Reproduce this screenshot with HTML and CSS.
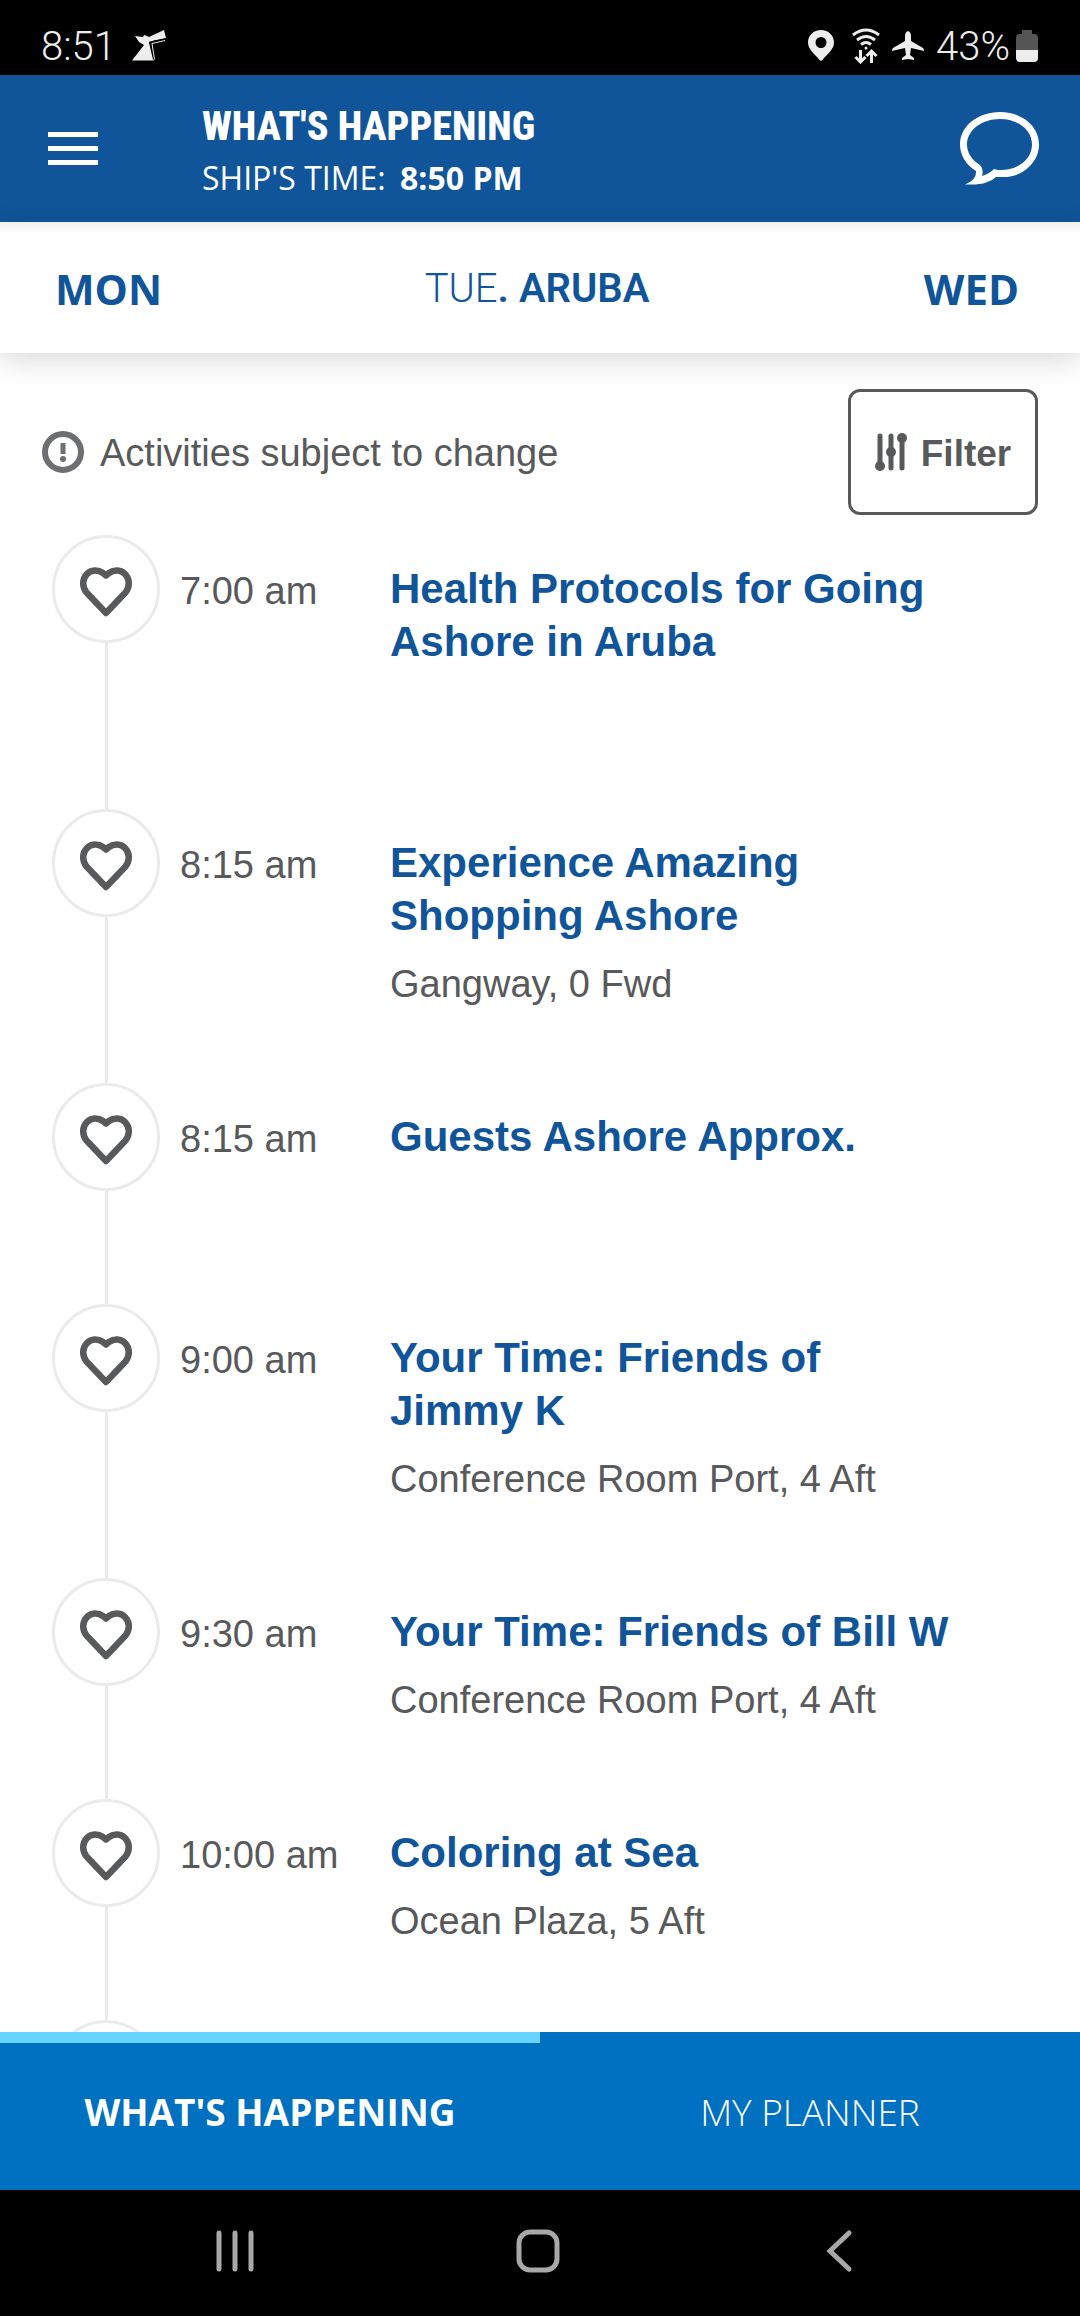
FILE: index.html
```html
<!DOCTYPE html>
<html lang="en">
<head>
    <meta charset="UTF-8">
    <meta name="viewport" content="width=device-width, initial-scale=1.0">
    <title>What's Happening</title>
    <link rel="stylesheet" href="styles.css">
</head>
<body>
    <!-- Icons used more than once -->
    <svg class="sprite" aria-hidden="true">
        <symbol id="heart" viewBox="0 0 54 50">
            <path d="M27 8.500 L24 6 C19 2.500 12 2.500 8 7 C3 12 3 20 7.500 25.500 L27 46 L46.500 25.500 C51 20 51 12 46 7 C42 2.500 35 2.500 30 6 Z" fill="none" stroke="#58595b" stroke-width="6.500" stroke-linejoin="round"/>
        </symbol>
    </svg>

    <div class="status-bar">
        <span>8:51</span>
        <svg class="status-bird" width="34" height="32" viewBox="0 0 34 32" fill="#ededed">
            <path d="M3 6l8 1 1-2 3 1 2 1L32 0l2 8-14 3-1 3 3 16.500H0L12 15l-5-3z"/>
            <path d="M33 9.500L18 12.500l4 17" fill="none" stroke="#000" stroke-width="2"/>
            <path d="M33 10.500L20 13.500l2.500 16" fill="none" stroke="#ededed"/>
        </svg>
        <div class="status-icons">
            <svg class="pin" width="26" height="32" viewBox="0 0 26 32" fill="#ededed">
                <path fill-rule="evenodd" d="M13 0C5.500 0 0 5.500 0 12.500 0 20 8 25 11.500 30q1.500 1.500 3 0C18 25 26 20 26 12.500 26 5.500 20.500 0 13 0zm0 7a5.500 5.500 0 1 1 0 11 5.500 5.500 0 0 1 0-11z"/>
            </svg>
            <svg width="28" height="36" viewBox="0 0 28 36" fill="none" stroke="#ededed" stroke-width="3">
                <path d="M1 7q13-10 26 0M5 12q9-7 18 0M9 16.500q5-4 10 0"/>
                <circle cx="14" cy="20" r="1.500" fill="#ededed" stroke="none"/>
                <path d="M8.500 22v11M3.500 29l5 5 5-5M19.500 35V24M14.500 28l5-5 5 5"/>
            </svg>
            <svg width="32" height="32" viewBox="0 0 32 32" fill="#ededed">
                <path d="M16 1q3 1 3 5v5l12 7q1 1 1 3l-13-3-1 7 4 3v2l-6-1-6 1v-2l4-3-1-7-13 3q0-2 1-3l12-7V6q0-4 3-5z"/>
            </svg>
            <span>43%</span>
            <svg class="battery" width="22" height="32" viewBox="0 0 22 32">
                <path d="M6 0h10v4h2q4 0 4 4v12H0V8q0-4 4-4h2z" fill="#555"/>
                <path d="M0 20h22v8q0 4-4 4H4q-4 0-4-4z" fill="#ededed"/>
            </svg>
        </div>
    </div>

    <header class="app-header">
        <button class="icon-btn" aria-label="Menu">
            <svg width="50" height="34" viewBox="0 0 50 34" fill="#fff">
                <path d="M0 0h50v5H0zM0 14h50v5H0zM0 28h50v5H0z"/>
            </svg>
        </button>
        <div class="header-text">
            <h1>WHAT'S HAPPENING</h1>
            <p>SHIP'S TIME: <strong>8:50 PM</strong></p>
        </div>
        <button class="icon-btn" aria-label="Chat">
            <svg width="80" height="74" viewBox="0 0 80 74" fill="#fff">
                <path fill-rule="evenodd" d="M40 0C62 0 79 14 79 32.500S62 65 44 65L36 65Q32 69 26 70.500Q20 73 5 72.500Q17 68 16 59C6 53 0 43 0 32.500C0 14 18 0 40 0zM40 7C22 7 7 18 7 32.500C7 41 12 48 20 53Q24 57 22 64Q29 62 34 57L38 58C58 59 72 47 72 32.500C72 18 58 7 40 7z"/>
            </svg>
        </button>
    </header>

    <nav class="day-nav">
        <a href="#mon">MON</a>
        <span class="current-day">TUE<strong>. ARUBA</strong></span>
        <a href="#wed">WED</a>
    </nav>

    <main class="content">
        <div class="toolbar">
            <svg width="42" height="42" viewBox="0 0 42 42">
                <circle cx="21" cy="21" r="18" fill="none" stroke="#6d6e71" stroke-width="6"/>
                <path d="M18.500 12h5v11h-5z" fill="#6d6e71"/>
                <circle cx="21" cy="28" r="3" fill="#6d6e71"/>
            </svg>
            <p>Activities subject to change</p>
            <button class="filter-btn">
                <svg width="32" height="38" viewBox="0 0 32 38" fill="#58595b" stroke="#58595b" stroke-width="5" stroke-linecap="round">
                    <path d="M5 3v32M16 3v32M27 3v32"/>
                    <g stroke="none">
                        <circle cx="5" cy="33" r="5"/>
                        <circle cx="16" cy="19" r="5"/>
                        <circle cx="27" cy="5" r="5"/>
                    </g>
                </svg>
                <span>Filter</span>
            </button>
        </div>

        <ul class="timeline">
            <li class="event">
                <button class="fav-btn" aria-label="Add to favorites"><svg><use href="#heart"/></svg></button>
                <time>7:00 am</time>
                <div class="event-info">
                    <h2>Health Protocols for Going Ashore in Aruba</h2>
                    <p></p>
                </div>
            </li>
            <li class="event">
                <button class="fav-btn" aria-label="Add to favorites"><svg><use href="#heart"/></svg></button>
                <time>8:15 am</time>
                <div class="event-info">
                    <h2>Experience Amazing Shopping Ashore</h2>
                    <p>Gangway, 0 Fwd</p>
                </div>
            </li>
            <li class="event">
                <button class="fav-btn" aria-label="Add to favorites"><svg><use href="#heart"/></svg></button>
                <time>8:15 am</time>
                <div class="event-info">
                    <h2>Guests Ashore Approx.</h2>
                    <p></p>
                </div>
            </li>
            <li class="event">
                <button class="fav-btn" aria-label="Add to favorites"><svg><use href="#heart"/></svg></button>
                <time>9:00 am</time>
                <div class="event-info">
                    <h2>Your Time: Friends of Jimmy K</h2>
                    <p>Conference Room Port, 4 Aft</p>
                </div>
            </li>
            <li class="event">
                <button class="fav-btn" aria-label="Add to favorites"><svg><use href="#heart"/></svg></button>
                <time>9:30 am</time>
                <div class="event-info">
                    <h2>Your Time: Friends of Bill W</h2>
                    <p>Conference Room Port, 4 Aft</p>
                </div>
            </li>
            <li class="event">
                <button class="fav-btn" aria-label="Add to favorites"><svg><use href="#heart"/></svg></button>
                <time>10:00 am</time>
                <div class="event-info">
                    <h2>Coloring at Sea</h2>
                    <p>Ocean Plaza, 5 Aft</p>
                </div>
            </li>
            <li class="event">
                <button class="fav-btn" aria-label="Add to favorites"><svg><use href="#heart"/></svg></button>
            </li>
        </ul>
    </main>

    <nav class="tabs">
        <a class="active" href="#happening">WHAT'S HAPPENING</a>
        <a href="#planner">MY PLANNER</a>
    </nav>

    <div class="system-nav">
        <button aria-label="Recent apps">
            <svg width="44" height="44" viewBox="0 0 44 44" stroke="#a8a8a8" stroke-width="5" stroke-linecap="round">
                <path d="M5 4v36M21 4v36M37 4v36"/>
            </svg>
        </button>
        <button aria-label="Home">
            <svg width="44" height="44" viewBox="0 0 44 44" fill="none" stroke="#a8a8a8" stroke-width="5">
                <rect x="3" y="3" width="38" height="38" rx="11"/>
            </svg>
        </button>
        <button aria-label="Back">
            <svg width="44" height="44" viewBox="0 0 44 44" fill="none" stroke="#a8a8a8" stroke-width="5" stroke-linecap="round">
                <path d="M31 4L12 22l19 18"/>
            </svg>
        </button>
    </div>
</body>
</html>
```
FILE: styles.css
```css
* {
    box-sizing: border-box;
}

body {
    font-family: "Liberation Sans", Arial, sans-serif;
    font-size: 38px;
    color: #58595b;
    background: #fff;
    margin: 0;
    height: 100vh;
    display: flex;
    flex-direction: column;
    overflow: hidden;
}

h1, h2, p, ul {
    margin: 0;
    padding: 0;
    font-size: inherit;
}

button {
    background: none;
    border: none;
    padding: 0;
    font: inherit;
    color: inherit;
    cursor: pointer;
}

svg {
    display: block;
    flex: none;
}

.sprite {
    position: absolute;
    width: 0;
    height: 0;
}

/* Status bar */
.status-bar {
    display: flex;
    align-items: center;
    flex: none;
    height: 75px;
    padding: 17px 42px 0 41px;
    background: #000;
    color: #ededed;
    font-family: Roboto, sans-serif;
    font-size: 40px;
    font-weight: 300;
}

.status-bird {
    margin-left: 16px;
}

.status-icons {
    display: flex;
    align-items: center;
    gap: 12px;
    margin-left: auto;
}

.pin {
    margin-right: 6px;
}

.battery {
    margin-left: -6px;
}

/* Header */
.app-header {
    display: flex;
    align-items: center;
    flex: none;
    height: 147px;
    padding: 0 40px 0 48px;
    background: #10559a;
    color: #fff;
}

.header-text {
    flex: 1;
    margin-left: 104px;
    padding-top: 6px;
}

.header-text h1 {
    font-family: "Roboto Condensed", "Liberation Sans Narrow", sans-serif;
    font-size: 40px;
    font-weight: 800;
    line-height: 52px;
}

.header-text p {
    font-family: "Open Sans", sans-serif;
    font-size: 32px;
    line-height: 50px;
}

.header-text strong {
    margin-left: 6px;
}

/* Day switcher */
.day-nav {
    display: grid;
    grid-template-columns: 1fr auto 1fr;
    align-items: center;
    flex: none;
    height: 131px;
    padding: 2px 61px 0 55px;
    background: linear-gradient(#f0f0f0, #fff 12px);
    box-shadow: 0 6px 28px rgba(0, 0, 0, 0.16);
    color: #10559a;
    font-family: "Open Sans", sans-serif;
    font-size: 42px;
}

.day-nav a {
    color: inherit;
    font-weight: 700;
    text-decoration: none;
}

.day-nav a:last-child {
    text-align: right;
}

.current-day {
    font-family: Roboto, sans-serif;
    font-size: 40px;
    font-weight: 300;
}

.current-day strong {
    font-weight: 600;
}

/* Activities */
.content {
    flex: 1;
    min-height: 0;
    overflow: hidden;
}

.toolbar {
    display: flex;
    align-items: center;
    gap: 16px;
    padding: 36px 42px 20px;
}

.toolbar p,
.filter-btn span {
    padding-top: 3px;
}

.filter-btn {
    display: flex;
    align-items: center;
    justify-content: center;
    gap: 14px;
    width: 190px;
    height: 126px;
    margin-left: auto;
    border: 3px solid #58595b;
    border-radius: 12px;
    font-size: 37px;
    font-weight: 700;
}

.timeline {
    list-style: none;
    padding: 0 52px;
}

.event {
    display: grid;
    grid-template-columns: 108px 190px 1fr;
    column-gap: 20px;
    align-items: start;
    /* vertical line behind the hearts */
    background: linear-gradient(#ebebeb, #ebebeb) 53px 0 / 3px 100% no-repeat;
}

.fav-btn {
    display: flex;
    align-items: center;
    justify-content: center;
    width: 108px;
    height: 108px;
    padding-top: 5px;
    border: 3px solid #ebebeb;
    border-radius: 50%;
    background: #fff;
}

.fav-btn svg {
    width: 54px;
    height: 50px;
}

.event time {
    padding-top: 30px;
    line-height: 53px;
}

.event-info {
    max-width: 560px;
    padding: 27px 0 72px;
}

.event-info h2 {
    color: #10559a;
    font-size: 42px;
    line-height: 53px;
}

.event-info p {
    min-height: 53px;
    margin-top: 16px;
    line-height: 53px;
}

/* Bottom tabs */
.tabs {
    display: flex;
    flex: none;
    height: 158px;
    background: #0070c0;
    font-family: "Open Sans", sans-serif;
    font-size: 37px;
    font-weight: 300;
}

.tabs a {
    display: flex;
    flex: 1;
    align-items: center;
    justify-content: center;
    padding-bottom: 10px;
    border-top: 11px solid transparent;
    color: #fff;
    text-decoration: none;
}

.tabs .active {
    border-color: #67d5ff;
    font-weight: 700;
}

/* Android navigation */
.system-nav {
    display: flex;
    align-items: center;
    justify-content: space-between;
    flex: none;
    height: 126px;
    padding: 0 218px 4px 214px;
    background: #000;
}
```
